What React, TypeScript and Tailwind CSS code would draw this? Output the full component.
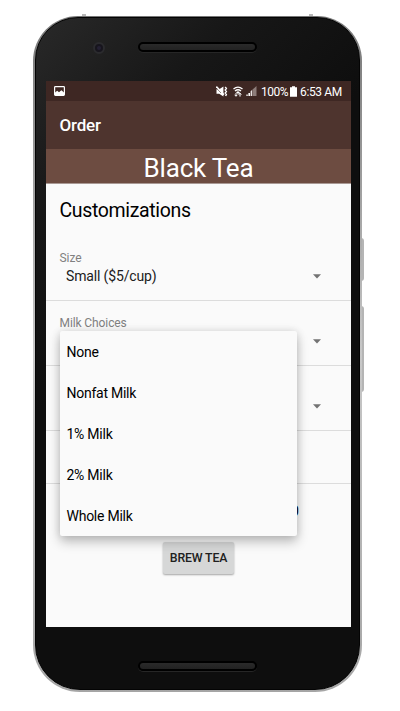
const milkChoices = ["None", "Nonfat Milk", "1% Milk", "2% Milk", "Whole Milk"];

function Caret() {
  return (
    <svg className="h-[5px] w-[8px]" viewBox="0 0 8 5">
      <path d="M0 0.3H8L4 4.5Z" fill="#737373" />
    </svg>
  );
}

function PictureIcon() {
  return (
    <svg className="h-[10px] w-[11px]" viewBox="0 0 11 10">
      <rect x="0.6" y="0.6" width="9.8" height="8.8" rx="0.8" fill="none" stroke="white" strokeWidth="1.2" />
      <path d="M1 9V6.6L3.2 4.8L5 6.3L7.4 4.3L10 6.6V9Z" fill="white" />
    </svg>
  );
}

function MuteIcon() {
  return (
    <svg className="h-[11px] w-[12px]" viewBox="0 0 12 11">
      <path d="M0.5 3.2H3.2L7.4 0.4V10.6L3.2 7.8H0.5Z" fill="white" />
      <path d="M0 1.6L5 7" stroke="#3e2723" strokeWidth="0.7" />
      <path d="M0.4 0.6L8 8.8" stroke="white" strokeWidth="1.4" />
      <path d="M9.2 1L10.4 2.5L9.2 4L10.4 5.5L9.2 7L10.4 8.5L9.6 10" fill="none" stroke="white" strokeWidth="1.4" />
    </svg>
  );
}

function WifiIcon() {
  return (
    <svg className="h-[11px] w-[10px]" viewBox="0 0 10 11" fill="none" stroke="white">
      <path d="M0.5 3Q5 -0.8 9.5 3" strokeWidth="1.3" />
      <path d="M2 5Q5 2.4 8 5" strokeWidth="1.3" />
      <path d="M3.3 6.3Q5 4.8 6.7 6.3L5 7.8Z" fill="white" strokeWidth="0.4" />
      <path d="M3 7V10M1.7 8.8L3 10.3L4.3 8.8M7 10.6V7.4M5.7 8.6L7 7.1L8.3 8.6" strokeWidth="1" />
    </svg>
  );
}

function SignalIcon() {
  return (
    <svg className="h-[10px] w-[11px]" viewBox="0 0 11 10">
      <path d="M0.4 8.4H1.7V10H0.4ZM2.4 7H4V10H2.4Z" fill="white" />
      <path d="M4.6 5.2L6 4V10H4.6Z" fill="#e6e0df" />
      <path d="M6.3 3.7L10.5 0V10H6.3Z" fill="#8d7d7a" />
    </svg>
  );
}

function BatteryIcon() {
  return (
    <svg className="h-[11px] w-[7px]" viewBox="0 0 7 11">
      <path d="M2 0.2H5V1.2H7V10.8H0V1.2H2Z" fill="white" />
    </svg>
  );
}

function Speaker() {
  return (
    <div className="h-[10px] w-[119px] rounded-full border-2 border-black bg-gradient-to-b from-[#2a2a2a] to-[#222222] shadow-[0_1px_0_#262626]" />
  );
}

function StatusBar() {
  return (
    <div className="flex h-[20px] items-center bg-[#3e2723] pl-[8px] pr-[9px] text-white">
      <PictureIcon />
      <div className="ml-auto flex items-center">
        <MuteIcon />
        <div className="ml-[5px] flex"><WifiIcon /></div>
        <div className="ml-[3px] flex"><SignalIcon /></div>
        <span className="ml-[4px] w-[26px] whitespace-nowrap pt-px text-[12px] leading-[20px] tracking-[-0.5px]">100%</span>
        <div className="ml-[3px] flex"><BatteryIcon /></div>
        <span className="ml-[3px] w-[42px] whitespace-nowrap pt-px text-[12px] leading-[20px] tracking-[-0.35px]">6:53 AM</span>
      </div>
    </div>
  );
}

function MilkMenu() {
  return (
    <ul className="absolute left-[14px] top-[30px] z-10 w-[237px] rounded-[2px] bg-[#fafafa] shadow-[0_6px_12px_rgba(0,0,0,0.24),0_0_8px_rgba(0,0,0,0.12)]">
      {milkChoices.map((choice) => (
        <li key={choice} className="flex h-[41px] items-center pl-[6.5px] pt-[2px] text-[14px] tracking-[-0.25px] text-black">
          {choice}
        </li>
      ))}
    </ul>
  );
}

export default function App() {
  return (
    <div className="h-[711px] w-[400px] overflow-hidden bg-white pl-[33px] pt-[16px] font-['Roboto',sans-serif]">
      <div className="relative h-[676px] w-[329px]">
        <div className="absolute left-[328px] top-[222px] h-[43px] w-[3px] rounded-r-sm bg-[#b5b5b5]" />
        <div className="absolute left-[328px] top-[290px] h-[86px] w-[3px] rounded-r-sm bg-[#b5b5b5]" />
        <div className="absolute left-[49px] top-[-2px] h-[3px] w-[4px] bg-[#b9b9b9]" />
        <div className="absolute left-[276px] top-[-2px] h-[3px] w-[4px] bg-[#b9b9b9]" />
        <div className="relative h-full rounded-[45px_45px_47px_47px] bg-gradient-to-b from-[#777777] via-[#c8c8c8] to-[#a5a5a5] px-[2px] pb-[2px] pt-px">
          <div className="flex h-full flex-col rounded-[43px_43px_45px_45px] border border-[#040404] bg-[linear-gradient(135deg,#292929_0%,#171717_20%,#0e0e0e_40%,#0e0e0e_100%)] pl-[10px] pr-[8px]">
            <div className="flex h-[63px] items-start pt-[24px]">
              <div className="ml-[47px] flex h-[12px] w-[12px] items-center justify-center rounded-full border-2 border-[#2b2b2e] bg-[#17151d]">
                <div className="h-[4px] w-[4px] rounded-full bg-[#242033]" />
              </div>
              <div className="ml-[33px]"><Speaker /></div>
            </div>
            <main className="flex h-[546px] w-[305px] flex-none flex-col overflow-hidden bg-[#fafafa] text-[#202020]">
              <StatusBar />
              <header className="flex h-[48px] items-center bg-[#4e342e] pl-[13.5px] pt-[2px] text-[17px] font-medium tracking-[-0.2px] text-white">Order</header>
              <div className="flex h-[35px] items-center justify-center border-b border-[#a99994] bg-[#6d4c41] pt-[3px] text-[26px] leading-none tracking-[-0.2px] text-white">
                <span>Black Tea</span>
              </div>
              <h1 className="h-[63px] pl-[13.5px] pt-[15px] text-[19.5px] leading-[24px] tracking-[-0.35px] text-black">Customizations</h1>
              <section className="h-[54px] border-b border-[#dcdcdc] pl-[13.5px] pr-[30px] pt-[3px]">
                <div className="text-[12px] leading-[16px] tracking-[-0.05px] text-[#808080]">Size</div>
                <div className="flex items-center justify-between pl-[6.5px] text-[14px] leading-[20px] tracking-[-0.15px]">
                  Small ($5/cup)
                  <Caret />
                </div>
              </section>
              <section className="relative h-[65px] border-b border-[#dcdcdc] pl-[13.5px] pr-[30px] pt-[14px]">
                <div className="text-[12px] leading-[16px] tracking-[-0.1px] text-[#808080]">Milk Choices</div>
                <div className="flex h-[20px] items-center justify-end"><Caret /></div>
                <MilkMenu />
              </section>
              <section className="flex h-[65px] items-center justify-end border-b border-[#dcdcdc] pr-[30px] pt-[17px]">
                <Caret />
              </section>
              <section className="h-[53px] flex-none border-b border-[#dcdcdc]" />
              <div className="flex h-[58px] flex-none justify-end pr-[52px] pt-[17px] text-[15px] leading-[20px] text-black">0</div>
              <button className="ml-[117px] h-[32px] w-[71px] flex-none rounded-[2px] bg-[#d6d7d7] text-[12.3px] font-medium leading-[32px] tracking-[-0.15px] text-[#202020] shadow-[0_1px_2px_rgba(0,0,0,0.35)]">
                BREW TEA
              </button>
            </main>
            <div className="ml-[92px] mt-[34px]"><Speaker /></div>
          </div>
        </div>
      </div>
    </div>
  );
}
